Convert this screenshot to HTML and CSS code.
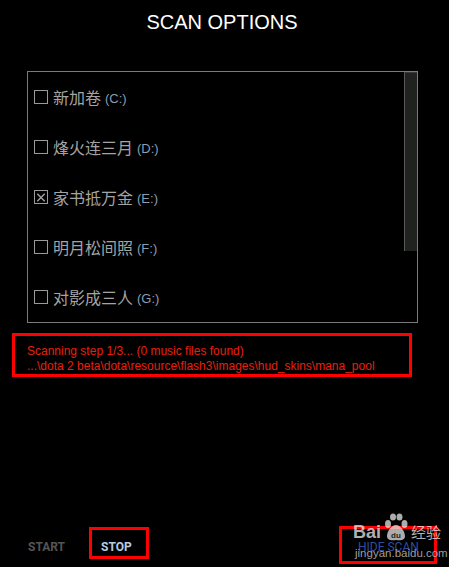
FILE: index.html
```html
<!DOCTYPE html>
<html>
<head>
<meta charset="utf-8">
<link rel="stylesheet" href="styles.css">
</head>
<body>
<div class="page">
  <h1 class="title">SCAN OPTIONS</h1>
  <div class="drives">
    <ul class="drive-list">
      <li class="drive"><span class="check"></span><span class="name">新加卷</span><span class="letter">(C:)</span></li>
      <li class="drive"><span class="check"></span><span class="name">烽火连三月</span><span class="letter">(D:)</span></li>
      <li class="drive"><span class="check checked"><svg viewBox="0 0 13 13" width="13" height="13"><path d="M2.5 2.5 L10.5 10.5 M10.5 2.5 L2.5 10.5" stroke="#a0a0a0" stroke-width="1.6" fill="none"/></svg></span><span class="name">家书抵万金</span><span class="letter">(E:)</span></li>
      <li class="drive"><span class="check"></span><span class="name">明月松间照</span><span class="letter">(F:)</span></li>
      <li class="drive"><span class="check"></span><span class="name">对影成三人</span><span class="letter">(G:)</span></li>
    </ul>
    <div class="scrollbar"><div class="thumb"></div></div>
  </div>
  <div class="status">
    <div>Scanning step 1/3... (0 music files found)</div>
    <div>...\dota 2 beta\dota\resource\flash3\images\hud_skins\mana_pool</div>
  </div>
  <div class="footer">
    <span class="btn start">START</span>
    <span class="btn stop marked">STOP</span>
    <span class="btn hide marked">HIDE SCAN</span>
  </div>
  <div class="watermark">
    <div class="wm-top"><span class="wm-bai">Bai</span><svg class="paw" viewBox="0 0 26 30" width="26" height="30"><g fill="rgba(230,230,230,0.75)"><ellipse cx="5" cy="11" rx="3" ry="4"/><ellipse cx="10" cy="4" rx="3" ry="3.6"/><ellipse cx="16.5" cy="4" rx="3" ry="3.6"/><ellipse cx="21.5" cy="11" rx="3" ry="4"/><path d="M13 12 C8 12 4 19 4 23 C4 27 8 28 13 27 C18 28 22 27 22 23 C22 19 18 12 13 12 Z"/></g><text x="13" y="25" font-size="8" font-family="Liberation Sans, sans-serif" font-weight="bold" fill="#222" text-anchor="middle">du</text></svg><span class="wm-cn">经验</span></div>
    <div class="wm-url">jingyan.baidu.com</div>
  </div>
</div>
</body>
</html>
```
FILE: styles.css
```css
html, body {
  margin: 0;
  padding: 0;
  background: #000;
}
.page {
  position: relative;
  height: 567px;
  display: flex;
  flex-direction: column;
  font-family: "Liberation Sans", Arial, sans-serif;
}
.title {
  margin: 0;
  padding: 10px 5px 0 0;
  font-size: 20px;
  line-height: 24px;
  font-weight: normal;
  color: #fff;
  text-align: center;
}
.drives {
  margin: 37px 0 0 27px;
  width: 389px;
  height: 250px;
  border: 1px solid #7a7a7a;
  display: flex;
}
.drive-list {
  list-style: none;
  margin: 0;
  padding: 0;
  flex: 1;
}
.drive {
  height: 50px;
  display: flex;
  align-items: center;
  padding-left: 6px;
}
.check {
  width: 12px;
  height: 12px;
  border: 1px solid #9a9a9a;
  margin-right: 5px;
  display: flex;
  align-items: center;
  justify-content: center;
}
.check svg {
  display: block;
}
.name {
  font-family: "Noto Sans CJK SC", sans-serif;
  font-size: 16px;
  color: #a4a4a4;
  margin-right: 4px;
}
.letter {
  font-size: 13px;
  color: #8c9db0;
  padding-top: 2px;
}
.scrollbar {
  width: 13px;
  height: 250px;
}
.thumb {
  height: 178px;
  background: #1f221f;
  border-left: 1px solid #5a5a5a;
  border-top: 1px solid #3a3a3a;
}
.status {
  margin: 10px 0 0 12px;
  width: 376px;
  border: 3px solid #ff0000;
  padding: 8px 6px 0 12px;
  font-size: 12px;
  line-height: 15px;
  color: #e8200c;
  white-space: nowrap;
}
.footer {
  margin-top: auto;
  display: flex;
  padding: 0 0 12px 28px;
  font-family: Roboto, sans-serif;
  font-weight: bold;
  font-size: 12px;
  line-height: 16px;
}
.btn {
  position: relative;
}
.start {
  color: #555555;
  width: 73px;
}
.stop {
  color: #b8cce0;
  width: 257px;
}
.hide {
  color: #2f4f9e;
  font-weight: normal;
}
.marked::after {
  content: "";
  position: absolute;
  border: 3px solid #ff0000;
  box-sizing: border-box;
}
.stop::after {
  left: -12px;
  top: -12px;
  width: 60px;
  height: 32px;
}
.hide::after {
  left: -19px;
  top: -13px;
  width: 98px;
  height: 38px;
}
.watermark {
  position: absolute;
  left: 353px;
  top: 513px;
  color: rgba(235, 235, 235, 0.75);
}
.wm-top {
  display: flex;
  align-items: flex-end;
  height: 30px;
}
.wm-bai {
  font-family: "Liberation Sans", Arial, sans-serif;
  font-weight: bold;
  font-size: 18px;
  line-height: 20px;
  margin-bottom: 1px;
}
.paw {
  display: block;
  margin: 0 2px 0 2px;
}
.wm-cn {
  font-family: "Noto Sans CJK SC", sans-serif;
  font-size: 15px;
  line-height: 20px;
  margin-bottom: 1px;
}
.wm-url {
  font-family: "Liberation Sans", Arial, sans-serif;
  font-size: 11.5px;
  line-height: 14px;
  color: rgba(200, 200, 200, 0.8);
  margin: 3px 0 0 2px;
}
```
